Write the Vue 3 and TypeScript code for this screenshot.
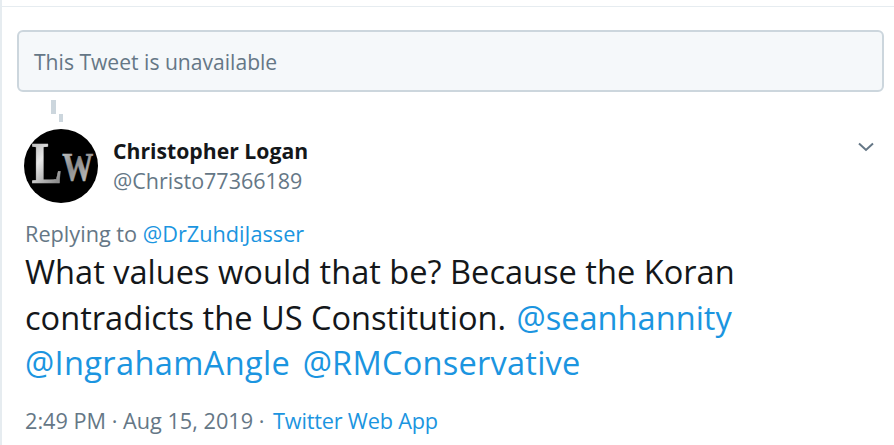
<script setup lang="ts">
const handles: string[] = ['@IngrahamAngle', '@RMConservative']
</script>

<template>
  <main class="page">
    <div class="notice">This Tweet is unavailable</div>
    <div class="thread">
      <i class="dot-a"></i>
      <i class="dot-b"></i>
    </div>
    <header class="author">
      <svg class="avatar" viewBox="0 0 74 74" role="img" aria-label="LW">
        <defs>
          <linearGradient id="metal" x1="0" y1="0" x2="1" y2="1">
            <stop offset="0" stop-color="#a0a0a0" />
            <stop offset="0.3" stop-color="#e8e8e8" />
            <stop offset="0.6" stop-color="#8d8d8d" />
            <stop offset="1" stop-color="#dcdcdc" />
          </linearGradient>
        </defs>
        <circle cx="37" cy="37" r="37" fill="#000" />
        <text transform="translate(7.5 54) scale(1 1.3)" class="monogram" fill="url(#metal)" stroke="url(#metal)" stroke-width="0.5"><tspan class="l">L</tspan><tspan class="w" dy="-2.5">W</tspan></text>
      </svg>
      <div class="names">
        <div class="name">Christopher Logan</div>
        <div class="handle">@Christo77366189</div>
      </div>
      <svg class="chevron" viewBox="0 0 16 10" aria-hidden="true">
        <path d="M1 1.5 L8 8 L15 1.5" />
      </svg>
    </header>
    <p class="replying">Replying to <a>@DrZuhdiJasser</a></p>
    <p class="body">
      What values would that be? Because the Koran<br />
      contradicts the US Constitution. <a class="sean">@seanhannity</a><br />
      <a v-for="h in handles" :key="h" class="mention">{{ h }}</a>
    </p>
    <p class="meta">2:49 PM · Aug 15, 2019 · <a class="source">Twitter Web App</a></p>
  </main>
</template>

<style>
html, body { margin: 0; background: #fff; }
</style>

<style scoped>
.page {
  box-sizing: border-box;
  width: 894px;
  height: 445px;
  overflow: hidden;
  border-left: 2px solid #e6ecf0;
  padding: 6px 10px 0 15px;
  background: linear-gradient(#e6ecf0, #e6ecf0) no-repeat 0 6px / 100% 1px, #fff;
  font-family: "Open Sans", "Noto Sans", sans-serif;
  color: #14171a;
}
.notice {
  box-sizing: border-box;
  height: 62px;
  margin-top: 24px;
  padding: 1px 15px 0;
  display: flex;
  align-items: center;
  background: #f5f8fa;
  border: 2px solid #ccd6dd;
  border-radius: 6px;
  color: #657786;
  font-size: 21.1px;
}
.thread { position: relative; height: 37px; }
.dot-a, .dot-b { position: absolute; background: #ccd6dd; }
.dot-a { left: 34px; top: 8px; width: 5px; height: 14px; }
.dot-b { left: 42px; top: 22px; width: 4px; height: 8px; }
.author {
  display: flex;
  align-items: flex-start;
  height: 74px;
  padding-left: 7px;
}
.avatar { width: 74px; height: 74px; flex: none; }
.monogram {
  font-family: "Liberation Serif", serif;
  font-weight: 700;
}
.l { font-size: 46px; }
.w { font-size: 31px; }
.names { margin-left: 15px; flex: 1; padding-top: 7px; }
.name { font-size: 21.2px; font-weight: 700; line-height: 30px; color: #14171a; }
.handle { font-size: 21.5px; line-height: 29px; color: #657786; }
.chevron {
  width: 16px;
  height: 10px;
  margin: 13px 10px 0 0;
  fill: none;
  stroke: #657786;
  stroke-width: 2;
}
.replying {
  margin: 15px 0 0 8px;
  font-size: 21.7px;
  line-height: 32px;
  color: #657786;
}
a { color: #1b95e0; }
.body {
  margin: -1px 0 0 8px;
  font-size: 32.6px;
  line-height: 45.5px;
  white-space: nowrap;
}
.sean { margin-left: 2px; }
.mention { letter-spacing: 0.34px; }
.mention + .mention { margin-left: 12.5px; letter-spacing: 0.22px; }
.meta {
  margin: 20px 0 0 8px;
  font-size: 21.7px;
  line-height: 30px;
  color: #657786;
}
.source { margin-left: 3px; letter-spacing: -0.2px; }
</style>
